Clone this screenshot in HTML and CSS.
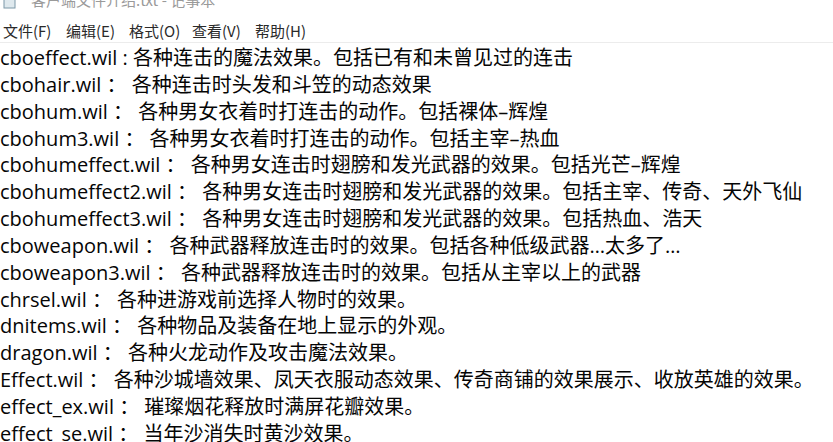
FILE: index.html
```html
<!DOCTYPE html>
<html lang="zh-CN">
<head>
<meta charset="utf-8">
<title>客户端文件介绍.txt - 记事本</title>
<link rel="stylesheet" href="styles.css">
</head>
<body>
<div class="window">
  <div class="titlebar">
    <svg class="icon" width="14" height="16" viewBox="0 0 14 16">
      <rect x="1" y="0" width="11" height="14" fill="#dfe9ee" stroke="#7d98a8" stroke-width="1"/>
      <rect x="3" y="2" width="7" height="1" fill="#9db5c3"/>
      <rect x="3" y="5" width="7" height="1" fill="#9db5c3"/>
    </svg>
    <span class="title">客户端文件介绍.txt - 记事本</span>
  </div>
  <div class="menubar">
    <span class="menu">文件(F)</span>
    <span class="menu">编辑(E)</span>
    <span class="menu">格式(O)</span>
    <span class="menu">查看(V)</span>
    <span class="menu">帮助(H)</span>
  </div>
  <div class="editor">
    <div class="line">cboeffect.wil : 各种连击的魔法效果。包括已有和未曾见过的连击</div>
    <div class="line">cbohair.wil ： 各种连击时头发和斗笠的动态效果</div>
    <div class="line">cbohum.wil ： 各种男女衣着时打连击的动作。包括裸体–辉煌</div>
    <div class="line">cbohum3.wil ： 各种男女衣着时打连击的动作。包括主宰–热血</div>
    <div class="line">cbohumeffect.wil ： 各种男女连击时翅膀和发光武器的效果。包括光芒–辉煌</div>
    <div class="line">cbohumeffect2.wil ： 各种男女连击时翅膀和发光武器的效果。包括主宰、传奇、天外飞仙</div>
    <div class="line">cbohumeffect3.wil ： 各种男女连击时翅膀和发光武器的效果。包括热血、浩天</div>
    <div class="line">cboweapon.wil ： 各种武器释放连击时的效果。包括各种低级武器…太多了…</div>
    <div class="line">cboweapon3.wil ： 各种武器释放连击时的效果。包括从主宰以上的武器</div>
    <div class="line">chrsel.wil ： 各种进游戏前选择人物时的效果。</div>
    <div class="line">dnitems.wil ： 各种物品及装备在地上显示的外观。</div>
    <div class="line">dragon.wil ： 各种火龙动作及攻击魔法效果。</div>
    <div class="line">Effect.wil ： 各种沙城墙效果、凤天衣服动态效果、传奇商铺的效果展示、收放英雄的效果。</div>
    <div class="line">effect_ex.wil ： 璀璨烟花释放时满屏花瓣效果。</div>
    <div class="line">effect_se.wil ： 当年沙消失时黄沙效果。</div>
  </div>
</div>
</body>
</html>
```
FILE: styles.css
```css
html, body {
  margin: 0;
  padding: 0;
  background: #ffffff;
}
.window {
  width: 833px;
  height: 442px;
  overflow: hidden;
  background: #ffffff;
}
.titlebar {
  height: 14px;
  display: flex;
  align-items: flex-end;
  gap: 14px;
  padding-left: 3px;
  overflow: hidden;
  background: #ffffff;
}
.icon {
  flex: none;
  margin-bottom: 4px;
}
.title {
  font-family: "Noto Sans CJK SC", sans-serif;
  font-size: 15px;
  line-height: 20px;
  color: #9a9a9a;
  margin-bottom: 4px;
}
.menubar {
  height: 24px;
  padding-top: 4px;
  display: flex;
  align-items: center;
  padding-left: 3px;
  border-bottom: 1px solid #ececec;
  background: #ffffff;
}
.menu {
  font-family: "Noto Sans CJK SC", sans-serif;
  font-size: 15px;
  color: #2a2a2a;
  width: 63px;
  white-space: nowrap;
}
.editor {
  padding-top: 2px;
}
.line {
  font-family: "Open Sans", "Noto Sans CJK SC", sans-serif;
  font-size: 20px;
  line-height: 26.85px;
  height: 26.85px;
  color: #050505;
  white-space: nowrap;
}
```
